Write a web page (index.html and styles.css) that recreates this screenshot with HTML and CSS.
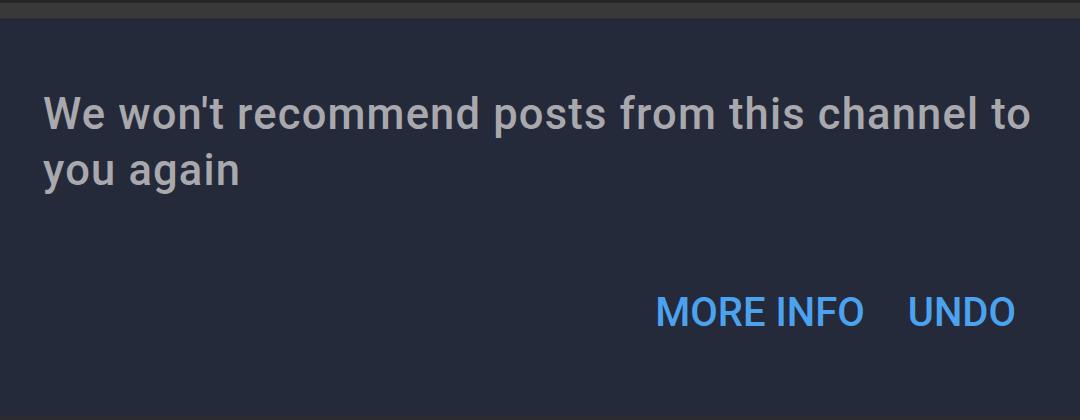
FILE: index.html
```
<!DOCTYPE html>
<html lang="en">
  <head>
    <meta charset="UTF-8">
    <title>Not interested</title>
    <link rel="stylesheet" href="styles.css">
  </head>
  <body>
    <div class="statusbar"></div>
    <section class="snackbar">
      <p class="message">We won't recommend posts from this channel to you again</p>
      <div class="actions">
        <a href="#" class="action">MORE INFO</a>
        <a href="#" class="action">UNDO</a>
      </div>
    </section>
    <div class="bottom-edge"></div>
  </body>
</html>
```

FILE: styles.css
```
html, body {
  height: 100%;
}
body {
  margin: 0;
  padding: 0;
  background-color: #252a3a;
  font-family: Roboto, "Liberation Sans", sans-serif;
  display: flex;
  flex-direction: column;
}
.statusbar {
  height: 15px;
  background-color: #393939;
  border-top: 3px solid #262626;
  border-bottom: 1px solid #2c2f38;
}
.snackbar {
  flex: 1;
  padding: 0 20px 0 43px;
  display: flex;
  flex-direction: column;
}
.message {
  margin: 68px 0 0;
  color: #a9a9ad;
  font-size: 43.5px;
  font-weight: 500;
  letter-spacing: 1.18px;
  line-height: 56px;
}
.actions {
  margin-top: auto;
  margin-bottom: 80px;
  display: flex;
  justify-content: flex-end;
  gap: 43px;
  padding-right: 44px;
}
.action {
  color: #4ba3f0;
  font-size: 40px;
  font-weight: 500;
  text-decoration: none;
}
.bottom-edge {
  height: 4px;
  background-color: #2b2b30;
}
```
